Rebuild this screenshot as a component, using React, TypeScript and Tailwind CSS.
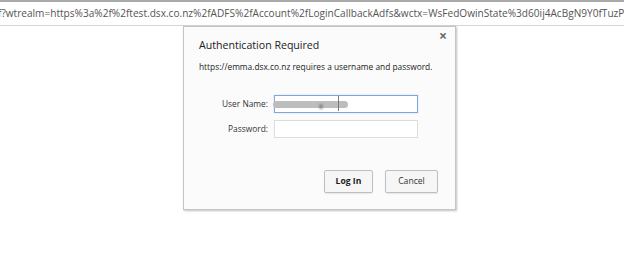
import React from 'react';

const font = { fontFamily: '"Open Sans", "Noto Sans", sans-serif' };

const AuthDialog: React.FC = () => {
  return (
    <div className="absolute left-[183px] top-[26px] w-[273px] h-[184px] bg-[#fbfbfb] border border-[#c4c4c4] shadow-[1px_1px_2px_rgba(0,0,0,0.25)] text-[#222]">
      {/* close */}
      <div className="absolute right-[8px] top-[2px] text-[14px] font-bold leading-none text-[#6a6a6a]">×</div>

      <div className="pl-[15px] pt-[10px]">
        <h1 className="text-[10.6px] leading-[16px] text-[#222] whitespace-nowrap">Authentication Required</h1>
        <p className="mt-[8px] text-[8.35px] leading-[12px] text-[#222] whitespace-nowrap">
          https://emma.dsx.co.nz requires a username and password.
        </p>
      </div>

      {/* Fields */}
      <div className="mt-[22px] grid grid-cols-[84px_144px] gap-x-[6px] gap-y-[7px] items-center text-[8.4px] text-[#333]">
        <label className="text-right whitespace-nowrap">User Name:</label>
        <div className="relative h-[18px] bg-white border border-[#7ea6e6] shadow-[0_0_1px_#a9c6f3]">
          <div className="absolute left-[-2px] top-[5px] w-[75px] h-[7px] rounded-full bg-[#bdbdbd] blur-[0.6px]" />
          <div className="absolute left-[44px] top-[8px] w-[4px] h-[5px] rounded-full bg-[#888] blur-[0.8px]" />
          <div className="absolute left-[63px] top-[0px] w-[1px] h-[15px] bg-[#777]" />
        </div>
        <label className="text-right whitespace-nowrap">Password:</label>
        <div className="h-[18px] bg-white border border-[#dcdcdc]" />
      </div>

      {/* Buttons */}
      <div className="mt-[32px] flex justify-end gap-[12px] pr-[17px]">
        <button className="w-[49px] h-[23px] bg-[#f6f6f6] border border-[#bfbfbf] rounded-[2px] text-[8.6px] font-bold text-[#222] shadow-[0_1px_1px_rgba(0,0,0,0.08)]">
          Log In
        </button>
        <button className="w-[53px] h-[23px] bg-[#f6f6f6] border border-[#bfbfbf] rounded-[2px] text-[8.6px] text-[#333] shadow-[0_1px_1px_rgba(0,0,0,0.08)]">
          Cancel
        </button>
      </div>
    </div>
  );
};

const App: React.FC = () => {
  return (
    <div className="relative w-[624px] h-[278px] bg-white overflow-hidden" style={font}>
      {/* Address bar */}
      <div className="h-[26px] border-t-2 border-t-[#a9a9a9] border-b border-b-[#d4d4d4] flex items-center overflow-hidden">
        <span className="ml-[-2px] whitespace-nowrap text-[10.1px] text-[#555]">
          f?wtrealm=https%3a%2f%2ftest.dsx.co.nz%2fADFS%2fAccount%2fLoginCallbackAdfs&amp;wctx=WsFedOwinState%3d60ij4AcBgN9Y0fTuzP
        </span>
      </div>

      <AuthDialog />
    </div>
  );
};

export default App;
